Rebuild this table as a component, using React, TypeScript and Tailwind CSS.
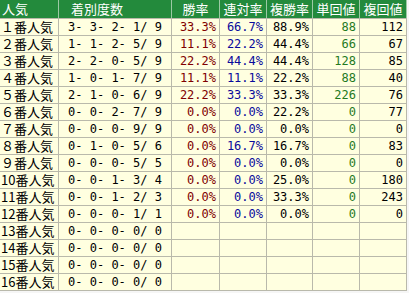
import React from 'react';

const rows: [string, string, string, string, string, string, string][] = [
  ['１番人気', '3- 3- 2- 1/ 9', '33.3%', '66.7%', '88.9%', '88', '112'],
  ['２番人気', '1- 1- 2- 5/ 9', '11.1%', '22.2%', '44.4%', '66', '67'],
  ['３番人気', '2- 2- 0- 5/ 9', '22.2%', '44.4%', '44.4%', '128', '85'],
  ['４番人気', '1- 0- 1- 7/ 9', '11.1%', '11.1%', '22.2%', '88', '40'],
  ['５番人気', '2- 1- 0- 6/ 9', '22.2%', '33.3%', '33.3%', '226', '76'],
  ['６番人気', '0- 0- 2- 7/ 9', '0.0%', '0.0%', '22.2%', '0', '77'],
  ['７番人気', '0- 0- 0- 9/ 9', '0.0%', '0.0%', '0.0%', '0', '0'],
  ['８番人気', '0- 1- 0- 5/ 6', '0.0%', '16.7%', '16.7%', '0', '83'],
  ['９番人気', '0- 0- 0- 5/ 5', '0.0%', '0.0%', '0.0%', '0', '0'],
  ['10番人気', '0- 0- 1- 3/ 4', '0.0%', '0.0%', '25.0%', '0', '180'],
  ['11番人気', '0- 0- 1- 2/ 3', '0.0%', '0.0%', '33.3%', '0', '243'],
  ['12番人気', '0- 0- 0- 1/ 1', '0.0%', '0.0%', '0.0%', '0', '0'],
  ['13番人気', '0- 0- 0- 0/ 0', '', '', '', '', ''],
  ['14番人気', '0- 0- 0- 0/ 0', '', '', '', '', ''],
  ['15番人気', '0- 0- 0- 0/ 0', '', '', '', '', ''],
  ['16番人気', '0- 0- 0- 0/ 0', '', '', '', '', ''],
];

const jp = "font-['Noto_Sans_CJK_JP',sans-serif]";
const mono = "font-['DejaVu_Sans_Mono',monospace] text-[12px] whitespace-pre";

export default function App() {
  return (
    <div className="w-[409px] h-[293px] bg-[#f6f6f6] overflow-hidden">
      <div className={`w-[407px] ${jp}`}>
        {/* header */}
        <div className="flex h-[19px] bg-[#238a3c] text-white text-[13px] leading-[18px] border-b border-[#b9b9ab]">
          <div className="w-[59px] pl-[2px] border-r border-[#9cc9a4]">人気</div>
          <div className="w-[113px] pl-[12px] border-r border-[#9cc9a4]">着別度数</div>
          <div className="w-[48px] text-center border-r border-[#9cc9a4]">勝率</div>
          <div className="w-[47px] text-center border-r border-[#9cc9a4]">連対率</div>
          <div className="w-[46px] text-center border-r border-[#9cc9a4]">複勝率</div>
          <div className="w-[47px] text-center border-r border-[#9cc9a4]">単回値</div>
          <div className="w-[47px] text-center border-r border-[#9cc9a4]">複回値</div>
        </div>
        {rows.map((r) => (
          <div key={r[0]} className="flex h-[17px] bg-[#ffffe0] leading-[16px] border-b border-[#b9b9ab]">
            <div className="w-[59px] pl-[1px] text-[13px] text-black border-r border-[#b9b9ab]">{r[0]}</div>
            <div className={`w-[113px] text-center text-black border-r border-[#b9b9ab] ${mono}`}>{r[1]}</div>
            <div className={`w-[48px] text-right pr-[3px] text-[#800000] border-r border-[#b9b9ab] ${mono}`}>{r[2]}</div>
            <div className={`w-[47px] text-right pr-[3px] text-[#0a0a9c] border-r border-[#b9b9ab] ${mono}`}>{r[3]}</div>
            <div className={`w-[46px] text-right pr-[3px] text-black border-r border-[#b9b9ab] ${mono}`}>{r[4]}</div>
            <div className={`w-[47px] text-right pr-[3px] text-[#1f7a1f] border-r border-[#b9b9ab] ${mono}`}>{r[5]}</div>
            <div className={`w-[47px] text-right pr-[3px] text-black border-r border-[#b9b9ab] ${mono}`}>{r[6]}</div>
          </div>
        ))}
      </div>
    </div>
  );
}
